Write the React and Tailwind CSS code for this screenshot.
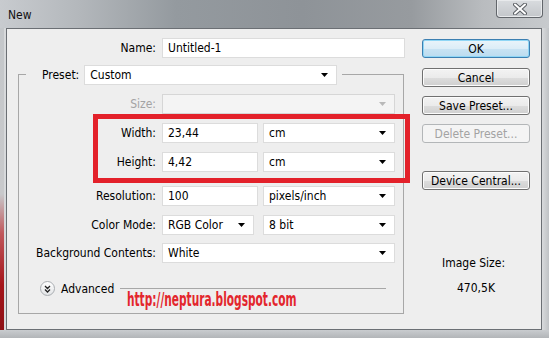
import React from 'react';

const font = { fontFamily: '"DejaVu Sans Condensed", "DejaVu Sans", sans-serif' };

const Arrow = ({ disabled }) => (
    <svg width="7" height="4" viewBox="0 0 7 4">
        <path d="M0 0h7L3.5 4z" fill={disabled ? '#b9b9b9' : '#000'} />
    </svg>
);

const Select = ({ value, width, disabled }) => (
    <div className={`flex items-center justify-between h-[20px] ${width} ${disabled ? 'bg-[#f4f4f4] border-[#d6d6d6]' : 'bg-white border-[#dcdcdc]'} border pl-[5px] pr-[8px]`}>
        <span>{value}</span>
        <Arrow disabled={disabled} />
    </div>
);

const Input = ({ value, width }) => (
    <div className={`flex items-center h-[20px] ${width} bg-white border border-[#dcdcdc] pl-[5px]`}>
        {value}
    </div>
);

const Row = ({ label, disabled, className, children }) => (
    <div className={`flex items-center ${className}`}>
        <div className={`w-[138px] text-right pr-[1px] ${disabled ? 'text-[#a3a3a3]' : ''}`}>{label}</div>
        <div className="ml-[5px] flex gap-[5px]">{children}</div>
    </div>
);

const Button = ({ children, primary, disabled, className }) => {
    let look = 'border-[#707070] bg-[linear-gradient(#f3f3f3_0%,#ebebeb_50%,#dddddd_51%,#cfcfcf_100%)] shadow-[inset_0_0_0_1px_#fcfcfc]';
    if (primary) look = 'border-[#3c7fb1] bg-[linear-gradient(#e9f4fa_0%,#dcedf7_50%,#c8e3f3_51%,#bcdcef_100%)] shadow-[inset_0_0_0_1px_#8fd6f5]';
    if (disabled) look = 'border-[#b3b6b8] bg-[#f4f4f4] text-[#a3a3a3]';
    return (
        <div className={`h-[19px] w-[108px] rounded-[3px] border flex items-center justify-center ${look} ${className}`}>
            {children}
        </div>
    );
};

export default function App() {
    return (
        <div className="w-[549px] h-[338px] flex flex-col overflow-hidden relative text-[12px] text-black leading-[14px]" style={font}>
            {/* title bar */}
            <div className="h-[28px] flex justify-between items-start bg-[linear-gradient(90deg,#c8cbcf_0%,#b4b8bc_14%,#949a9f_32%,#8e9398_55%,#979b9f_75%,#b9bcbf_88%,#c7cacd_100%)]">
                <div className="pl-[8px] pt-[8px] text-[#111]">New</div>
                <div className="mr-[6px] w-[47px] h-[18px] rounded-b-[4px] border border-t-0 border-[#62666b] bg-[linear-gradient(#d9dcdf,#c3c6ca)] shadow-[inset_0_0_0_1px_#e8eaec] flex items-center justify-center">
                    <svg width="14" height="12" viewBox="0 0 14 12">
                        <path d="M2 1.5l10 9M12 1.5l-10 9" stroke="#5a5e63" strokeWidth="4" strokeLinecap="round" />
                        <path d="M2 1.5l10 9M12 1.5l-10 9" stroke="#fff" strokeWidth="2" strokeLinecap="round" />
                    </svg>
                </div>
            </div>

            <div className="flex h-[302px]">
                <div className="w-[6px] flex">
                    <div className="w-[4px] bg-[linear-gradient(#c4c7ca_0%,#c8c9cb_55%,#c0585c_68%,#a5151b_85%,#8d1015_100%)]" />
                    <div className="w-[2px] bg-[#d7d9db]" />
                </div>

                {/* client */}
                <div className="w-[536px] border border-[#6b6f74] bg-[#eeeeee] flex">
                    <div className="w-[408px]">
                        <div className="flex items-center mt-[9px]">
                            <div className="w-[150px] text-right pr-[1px]">Name:</div>
                            <div className="ml-[5px]">
                                <Input value="Untitled-1" width="w-[243px]" />
                            </div>
                        </div>

                        <div className="ml-[11px] mt-[16px] w-[386px] border border-[#a7a7a7] pb-[17px]">
                            <div className="-mt-[10px] ml-[7px] pl-[16px] pr-[5px] w-fit flex items-center bg-[#eeeeee]">
                                <span>Preset:</span>
                                <div className="ml-[5px]">
                                    <Select value="Custom" width="w-[253px]" />
                                </div>
                            </div>

                            <Row label="Size:" disabled className="mt-[9px]">
                                <Select value="" width="w-[233px]" disabled />
                            </Row>
                            <Row label="Width:" className="mt-[9px]">
                                <Input value="23,44" width="w-[96px]" />
                                <Select value="cm" width="w-[132px]" />
                            </Row>
                            <Row label="Height:" className="mt-[9px]">
                                <Input value="4,42" width="w-[96px]" />
                                <Select value="cm" width="w-[132px]" />
                            </Row>
                            <Row label="Resolution:" className="mt-[14px]">
                                <Input value="100" width="w-[96px]" />
                                <Select value="pixels/inch" width="w-[132px]" />
                            </Row>
                            <Row label="Color Mode:" className="mt-[9px]">
                                <Select value="RGB Color" width="w-[92px]" />
                                <div className="ml-[4px]">
                                    <Select value="8 bit" width="w-[132px]" />
                                </div>
                            </Row>
                            <Row label="Background Contents:" className="mt-[8px]">
                                <Select value="White" width="w-[233px]" />
                            </Row>

                            <div className="flex items-center mt-[18px] ml-[21px] mr-[17px]">
                                <div className="w-[15px] h-[15px] rounded-full border border-[#a9adb1] bg-[linear-gradient(#ffffff,#e2e4e6)] flex items-center justify-center">
                                    <svg width="7" height="8" viewBox="0 0 7 8">
                                        <path d="M1 1l2.5 2.5L6 1M1 4.5L3.5 7 6 4.5" stroke="#222" strokeWidth="1.3" fill="none" />
                                    </svg>
                                </div>
                                <span className="ml-[6px]">Advanced</span>
                                <div className="ml-[6px] flex-1 border-t border-[#a7a7a7]" />
                            </div>
                        </div>
                    </div>

                    {/* buttons */}
                    <div className="ml-[7px] w-[108px] flex flex-col items-center">
                        <Button primary className="mt-[10px]">OK</Button>
                        <Button className="mt-[10px]">Cancel</Button>
                        <Button className="mt-[9px]">Save Preset...</Button>
                        <Button disabled className="mt-[9px]">Delete Preset...</Button>
                        <Button className="mt-[28px]">Device Central...</Button>
                        <div className="mt-[66px] -ml-[5px]">Image Size:</div>
                        <div className="mt-[11px]">470,5K</div>
                    </div>
                </div>

                <div className="w-[7px] bg-[linear-gradient(90deg,#d8dadc,#bfc2c5)]" />
            </div>

            <div className="h-[8px] bg-[linear-gradient(#c9cccf,#b2b5b8)]" />

            {/* annotation overlays */}
            <div className="absolute left-[93px] top-[114px] w-[317px] h-[69px] border-[5px] border-[#e3212a]" />
            <div
                className="absolute left-[127px] top-[289px] text-[19px] leading-[20px] font-bold text-[#e3262d] origin-left scale-x-[0.62] whitespace-nowrap"
                style={{ fontFamily: '"DejaVu Sans Condensed", "DejaVu Sans", sans-serif' }}
            >
                http://neptura.blogspot.com
            </div>
        </div>
    );
}
